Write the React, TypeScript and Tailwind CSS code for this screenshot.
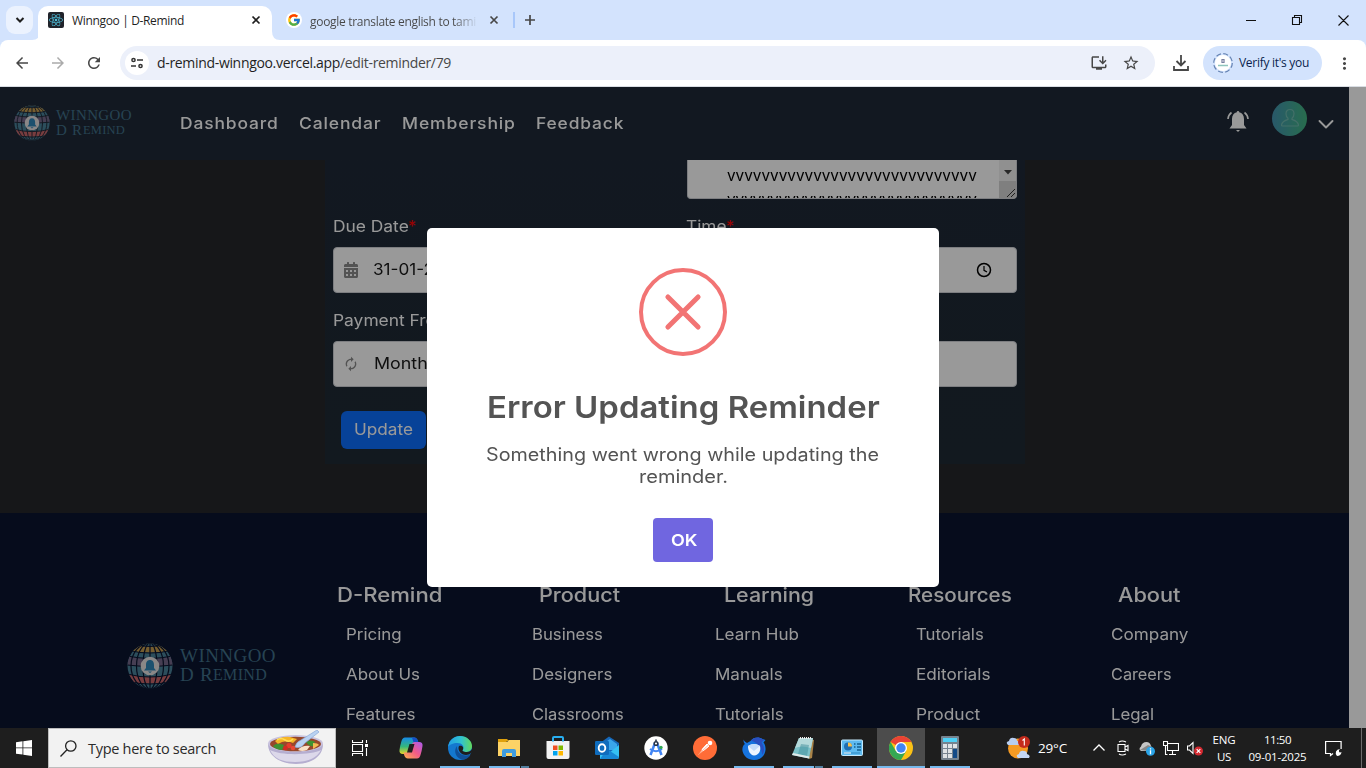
import React, { useLayoutEffect, useRef, useState } from "react";
import { FcGoogle } from "react-icons/fc";
import {
  MdArrowBack,
  MdArrowForward,
  MdRefresh,
  MdStarBorder,
  MdMoreVert,
  MdAutorenew,
  MdOutlineInstallDesktop,
} from "react-icons/md";
import { FaCalendarAlt, FaReact } from "react-icons/fa";

/* Single line of text tracked so that it fills a given width. */
function Fit({ w, className = "", children }: { w: number; className?: string; children: string }) {
  const ref = useRef<HTMLSpanElement>(null);
  const [ls, setLs] = useState(0);
  useLayoutEffect(() => {
    const el = ref.current;
    if (!el) return;
    const natural = el.getBoundingClientRect().width;
    setLs((w - natural) / children.length);
  }, []);
  return (
    <span ref={ref} className={"inline-block whitespace-nowrap " + className} style={{ letterSpacing: ls }}>
      {children}
    </span>
  );
}

/* Single line of text whose letters are widened to fill a given width. */
function Wide({ w, className = "", children }: { w: number; className?: string; children: string }) {
  const ref = useRef<HTMLSpanElement>(null);
  const [k, setK] = useState(1);
  useLayoutEffect(() => {
    const el = ref.current;
    if (el) setK(w / el.offsetWidth);
  }, []);
  return (
    <span className={"block shrink-0 whitespace-nowrap " + className} style={{ width: w }}>
      <span ref={ref} className="inline-block origin-left" style={{ transform: `scaleX(${k})` }}>
        {children}
      </span>
    </span>
  );
}

function Globe({ className, line }: { className: string; line: string }) {
  return (
    <svg viewBox="0 0 46 46" className={className}>
      <defs>
        <clipPath id="globe-clip">
          <circle cx="23" cy="23" r="22.5" />
        </clipPath>
      </defs>
      <g clipPath="url(#globe-clip)">
        <rect width="46" height="46" fill="#4a8299" />
        <path d="M0 0h46v7Q23 12 0 7z" fill="#c39b4f" />
        <path d="M10 0h26v2Q23 5 10 2z" fill="#4a8299" />
        <path d="M0 13Q23 18 46 13v9Q23 25 0 22z" fill="#75688a" />
        <path d="M0 31Q23 37 46 31v7Q23 43 0 38z" fill="#c9666a" />
        <g fill="none" stroke={line} strokeWidth="1.2">
          <path d="M23 0v46" />
          <ellipse cx="23" cy="23" rx="7" ry="23" />
          <ellipse cx="23" cy="23" rx="13.5" ry="23" />
          <ellipse cx="23" cy="23" rx="19" ry="23" />
          <path d="M8 1Q23 6 38 1M0 7Q23 13 46 7M0 13Q23 18 46 13M0 22Q23 25 46 22M0 31Q23 37 46 31M0 38Q23 44 46 38" />
        </g>
      </g>
      <circle cx="23" cy="23" r="9.3" fill="#e6e2e2" />
      <path d="M23 17c-3 0-4 2.300-4 5v3l-2 2.500h12l-2-2.500v-3c0-2.700-1-5-4-5zM21 28.500h4l-2 1.500z" fill="#2f86b8" />
    </svg>
  );
}

const NAV: [string, number, string][] = [
  ["Dashboard", 99, "mr-[20px]"],
  ["Calendar", 82, "mr-[21px]"],
  ["Membership", 114, "mr-[20px]"],
  ["Feedback", 88, ""],
];

const COLUMNS: { title: string; tw: number; shift: string; width: string; links: [string, number][] }[] = [
  { title: "D-Remind", tw: 105, shift: "-ml-[9px]", width: "w-[186px]", links: [["Pricing", 56], ["About Us", 74], ["Features", 70]] },
  { title: "Product", tw: 81, shift: "ml-[7px]", width: "w-[183px]", links: [["Business", 71], ["Designers", 80], ["Classrooms", 92]] },
  { title: "Learning", tw: 90, shift: "ml-[9px]", width: "w-[201px]", links: [["Learn Hub", 84], ["Manuals", 68], ["Tutorials", 69]] },
  { title: "Resources", tw: 104, shift: "-ml-[8px]", width: "w-[195px]", links: [["Tutorials", 68], ["Editorials", 74], ["Product", 64]] },
  { title: "About", tw: 62, shift: "ml-[7px]", width: "w-[120px]", links: [["Company", 77], ["Careers", 61], ["Legal", 43]] },
];

const UI = "font-['Open_Sans','Noto_Sans',sans-serif]";

function BrowserChrome() {
  return (
    <div className={"shrink-0 " + UI}>
      <div className="flex h-10 items-start bg-[#d3e3fd]">
        <div className="ml-[6px] mt-[6px] flex h-7 w-[27px] shrink-0 items-center justify-center rounded-[9px] bg-[#ebf2fe]">
          <svg className="h-3 w-3" viewBox="0 0 12 12" fill="none" stroke="#1f1f1f" strokeWidth="2"><path d="M2.500 4L6 7.500 9.500 4" /></svg>
        </div>
        <svg className="-ml-px h-10 w-2 shrink-0" viewBox="0 0 8 40"><path d="M0 40Q8 40 8 31V40z" fill="#fff" /></svg>
        <div className="-ml-[2px] mt-[6px] flex h-[34px] w-[234px] shrink-0 items-center rounded-t-[10px] bg-white pb-[6px] pl-[10px]">
          <div className="flex h-4 w-4 items-center justify-center rounded-[2px] bg-[#20232a]">
            <FaReact className="h-[14px] w-[14px] text-[#4fc0dc]" />
          </div>
          <Fit w={112} className="ml-[8px] mt-px text-[12px] text-[#1f1f1f]">Winngoo | D-Remind</Fit>
          <svg className="ml-[67px] h-[10px] w-[10px]" viewBox="0 0 10 10" stroke="#1f1f1f" strokeWidth="1.700"><path d="M1.500 1.500l7 7M8.500 1.500l-7 7" /></svg>
        </div>
        <svg className="h-10 w-2 shrink-0" viewBox="0 0 8 40"><path d="M8 40Q0 40 0 31V40z" fill="#fff" /></svg>
        <div className="flex h-10 items-center pl-[6px]">
          <div className="flex h-4 w-4 items-center justify-center rounded-full bg-white"><FcGoogle className="h-[14px] w-[14px]" /></div>
          <div className="ml-2 w-[168px] overflow-hidden bg-linear-to-r from-[#474747] from-85% to-[#d3e3fd] to-100% bg-clip-text text-transparent">
            <Fit w={166} className="text-[12px]">google translate english to tami</Fit>
          </div>
          <svg className="ml-[11px] h-[10px] w-[10px]" viewBox="0 0 10 10" stroke="#474747" strokeWidth="1.700"><path d="M1.500 1.500l7 7M8.500 1.500l-7 7" /></svg>
          <div className="ml-[14px] h-4 w-[1.500px] bg-[#a8c7fa]" />
          <svg className="ml-[9px] h-[12px] w-[12px]" viewBox="0 0 12 12" stroke="#474747" strokeWidth="1.700"><path d="M6 1v10M1 6h10" /></svg>
        </div>
        <svg className="ml-auto mr-[17px] h-10 w-[104px]" viewBox="0 0 104 40" fill="none" stroke="#111" strokeWidth="1.100">
          <path d="M1 20.500h10M47.500 17.500h7v7h-7zM49.500 17v-1.500h7v7H55M93.500 15.500l10 10M103.500 15.500l-10 10" />
        </svg>
      </div>
      <div className="bg-[#d3e3fd]">
        <div className="flex h-[47px] items-center rounded-t-lg border-b border-[#d9dde3] bg-white text-[#474747]">
          <MdArrowBack className="ml-[13px] h-[18px] w-[18px]" />
          <MdArrowForward className="ml-[18px] h-[18px] w-[18px] text-[#ababab]" />
          <MdRefresh className="ml-[18px] h-[18px] w-[18px]" />
          <div className="ml-[17px] flex h-[34px] w-[1035px] items-center rounded-full bg-[#ecf0fa] pl-[5px]">
            <div className="flex h-6 w-6 items-center justify-center rounded-full bg-white">
              <svg className="h-[14px] w-[14px]" viewBox="0 0 14 14" fill="none" stroke="#333" strokeWidth="1.500">
                <circle cx="3.500" cy="4" r="1.600" /><path d="M7 4h6M1 10h5" /><circle cx="10.500" cy="10" r="1.600" />
              </svg>
            </div>
            <div className="mb-px ml-[8px] flex text-[14px]">
              <Fit w={183} className="text-[#1f1f1f]">d-remind-winngoo.vercel.app</Fit>
              <Fit w={111} className="text-[#474747]">/edit-reminder/79</Fit>
            </div>
            <MdOutlineInstallDesktop className="ml-auto h-[18px] w-[18px]" />
            <MdStarBorder className="ml-[14px] mr-[15px] h-[18px] w-[18px]" />
          </div>
          <svg className="ml-[18px] h-4 w-4" viewBox="0 0 16 16" fill="none" stroke="#474747" strokeWidth="1.800"><path d="M8 0v10.500M3.500 6L8 10.500 12.500 6M1 11v4h14v-4" /></svg>
          <div className="ml-[14px] flex h-[34px] w-[119px] items-center rounded-full bg-[#d3e3fd] pl-[10px]">
            <svg className="h-5 w-5" viewBox="0 0 20 20">
              <circle cx="10" cy="10" r="8" fill="#fff" />
              <circle cx="10" cy="10" r="9.300" fill="none" stroke="#6684b4" strokeWidth="1.200" strokeDasharray="5 2.300" />
              <path d="M5 12.500h10" stroke="#8fc5bd" strokeWidth="1.500" />
              <path d="M9 6.500h2v3H9z" fill="none" stroke="#777e9f" strokeWidth="1.200" />
            </svg>
            <Fit w={70} className="ml-[6px] text-[12px] text-[#0a1f4d]">Verify it's you</Fit>
          </div>
          <MdMoreVert className="ml-[13px] h-[19px] w-[19px]" />
        </div>
      </div>
    </div>
  );
}

function NavBar() {
  return (
    <div className="flex h-[73px] shrink-0 items-center bg-[#1f2937] text-white">
      <Globe className="mb-px ml-[14px] h-9 w-9" line="#1f2937" />
      <div className="mb-[2px] ml-[6px] flex flex-col font-['Liberation_Serif',serif] leading-[15px] text-[#41718a]">
        <Fit w={76} className="text-[15px]">WINNGOO</Fit>
        <div className="flex text-[15px]">
          <Fit w={13}>D</Fit><span className="w-[3px]" /><Fit w={11}>R</Fit><Fit w={42} className="text-[12.500px]">EMIND</Fit>
        </div>
      </div>
      <div className="mb-[2px] ml-[48px] flex text-[16px] font-medium tracking-[0.8px]">
        {NAV.map(([t, w, m]) => (
          <Wide key={t} w={w} className={m}>{t}</Wide>
        ))}
      </div>
      <svg className="ml-auto mb-[4px] h-[21px] w-[22px]" viewBox="0 0 22 21" fill="#fff">
        <path d="M11 0a1.200 1.200 0 0 0-1.200 1.300C6.800 2 5 4.500 5 8v6l-2.500 3.500h17L17 14V8c0-3.500-1.800-6-4.800-6.700A1.200 1.200 0 0 0 11 0zM9 19h4l-2 2z" />
        <path d="M1 8q.2-4 3.500-6.500M21 8q-.2-4-3.500-6.500" fill="none" stroke="#fff" strokeWidth="1.600" />
      </svg>
      <div className="mb-[11px] ml-[23px] flex h-[35px] w-[35px] items-center justify-center rounded-full bg-linear-to-r from-[#4593b0] to-[#43b581]">
        <svg className="h-5 w-5" viewBox="0 0 20 20" fill="none" stroke="#70b9ae" strokeWidth="1.200">
          <path d="M10 1.500c-2.500 0-4 1.800-4 4.300 0 2 .8 3.700 2 4.500v1.200c-3 1-6 1.800-6.500 5.500q0 1 1 1h15q1 0 1-1c-.500-3.700-3.500-4.500-6.500-5.500v-1.200c1.200-.8 2-2.500 2-4.500 0-2.500-1.500-4.300-4-4.300z" />
        </svg>
      </div>
      <svg className="ml-[11px] mr-[15px] mt-[1px] h-4 w-4" viewBox="0 0 16 16" fill="none" stroke="#fff" strokeWidth="1.900" strokeLinecap="round" strokeLinejoin="round"><path d="M1.500 5L8 11.500 14.500 5" /></svg>
    </div>
  );
}

function FieldLabel({ w, children }: { w: number; children: string }) {
  return (
    <div className="flex h-5 items-center pb-[2px] text-[16px] text-white">
      <Wide w={w}>{children}</Wide>
      <span className="-ml-px text-[#f00]">*</span>
    </div>
  );
}

const box = "flex h-[46px] w-full items-center rounded-[4px] border border-[#d0d3d8] bg-white text-[#1a1a1a]";

function FormCard() {
  return (
    <div className="ml-[325px] flex h-[304px] w-[700px] shrink-0 gap-6 bg-linear-to-b from-[#1f2937] to-[#1e2a34] pl-2">
      <div className="w-[330px]">
        <div className="h-[57px]" />
        <FieldLabel w={76}>Due Date</FieldLabel>
        <div className={box + " mt-[10px]"}>
          <FaCalendarAlt className="ml-[10px] h-4 w-[14px] text-[#8b8b8b]" />
          <Wide w={93} className="mb-[2px] ml-[15px] text-[16px]">31-01-2025</Wide>
        </div>
        <div className="mt-[18px]"><FieldLabel w={163}>Payment Frequency</FieldLabel></div>
        <div className={box + " mt-[10px]"}>
          <MdAutorenew className="ml-[9px] h-4 w-4 text-[#8b8b8b]" />
          <Wide w={68} className="mb-[2px] ml-[15px] text-[16px]">Monthly</Wide>
        </div>
        <div className="ml-2 mt-6 flex h-[38px] w-[85px] items-center justify-center rounded-[6px] bg-[#0d6efd] pb-[2px] text-white">
          <Wide w={59} className="text-[16px]">Update</Wide>
        </div>
      </div>
      <div className="w-[330px]">
        <div className="flex h-[39px] overflow-hidden rounded-b-[4px] border border-t-0 border-[#d0d3d8] bg-white text-black">
          <div className="h-[38px] w-[311px] overflow-hidden pl-[39px] pt-[3px] text-[16px] leading-6">
            <Wide w={250}>vvvvvvvvvvvvvvvvvvvvvvvvvvvvv</Wide>
            <Wide w={250}>vvvvvvvvvvvvvvvvvvvvvvvvvvvvv</Wide>
          </div>
          <div className="flex w-[17px] flex-col bg-[#f1f1f1]">
            <div className="flex h-[21px] items-center justify-center">
              <svg className="mt-[3px] h-[5px] w-2" viewBox="0 0 8 5"><path d="M0 0h8L4 4.500z" fill="#444" /></svg>
            </div>
            <div className="flex grow items-end justify-end bg-[#d4d4d4]">
              <svg className="h-[10px] w-[10px]" viewBox="0 0 10 10" stroke="#333" strokeWidth="1"><path d="M1 9l8-8M5 9l4-4" /></svg>
            </div>
          </div>
        </div>
        <div className="-ml-px mt-[18px]"><FieldLabel w={41}>Time</FieldLabel></div>
        <div className={box + " mt-[10px] justify-end"}>
          <svg className="mb-px mr-[24px] h-4 w-4" viewBox="0 0 16 16" fill="none" stroke="#000" strokeWidth="1.500"><circle cx="8" cy="8" r="6.500" /><path d="M8 4v4.300l3 1.800" strokeWidth="1.200" /></svg>
        </div>
        <div className={box + " mt-[48px]"} />
      </div>
    </div>
  );
}

function Footer() {
  return (
    <div className="flex min-h-0 grow overflow-hidden bg-[#0a142f] text-white">
      <div className="flex w-[346px] shrink-0 items-start pl-[127px] pt-[130px]">
        <Globe className="h-[46px] w-[46px]" line="#0a142f" />
        <div className="ml-[7px] mt-[3px] flex flex-col font-['Liberation_Serif',serif] leading-[19px] text-[#41718a]">
          <Fit w={96} className="text-[19px]">WINNGOO</Fit>
          <div className="flex text-[19px]">
            <Fit w={16}>D</Fit><span className="w-[4px]" /><Fit w={13}>R</Fit><Fit w={54} className="text-[16px]">EMIND</Fit>
          </div>
        </div>
      </div>
      {COLUMNS.map((c) => (
        <div key={c.title} className={"shrink-0 pt-[67px] " + c.width}>
          <div className={"flex h-[30px] items-center text-[20px] font-medium " + c.shift}><Wide w={c.tw}>{c.title}</Wide></div>
          <div className="mt-[4px]">
            {c.links.map(([t, w]) => (
              <div key={t} className="flex h-10 items-center text-[16px]"><Wide w={w}>{t}</Wide></div>
            ))}
          </div>
        </div>
      ))}
    </div>
  );
}

function ErrorDialog() {
  return (
    <div className="absolute inset-0 flex items-center justify-center bg-black/40">
      <div className="flex h-[359px] w-[512px] flex-col items-center rounded-[5px] bg-white pt-10 text-[#545454]">
        <div className="flex h-[88px] w-[88px] shrink-0 items-center justify-center rounded-full border-4 border-[#f27474]">
          <svg className="h-10 w-10" viewBox="0 0 40 40" stroke="#f27474" strokeWidth="5" strokeLinecap="round"><path d="M4.900 4.900l30.200 30.200M35.100 4.900L4.900 35.100" /></svg>
        </div>
        <h2 className="mt-[33px] h-9 text-[30px] font-semibold leading-9"><Wide w={393}>Error Updating Reminder</Wide></h2>
        <div className="mt-[19px] flex flex-col items-center text-[18px] leading-[22px]">
          <Wide w={393} className="-ml-px">Something went wrong while updating the</Wide>
          <Wide w={89}>reminder.</Wide>
        </div>
        <button className="mt-[30px] flex h-11 w-[60px] items-center justify-center rounded-[4px] bg-[#7066e0] pb-px text-[16px] font-semibold text-white"><Wide w={27}>OK</Wide></button>
      </div>
    </div>
  );
}

function Svg({ children, size = "h-6 w-6" }: { children: React.ReactNode; size?: string }) {
  return <svg viewBox="0 0 24 24" className={size}>{children}</svg>;
}

const APPS: { id: string; bar: number; icon: React.ReactNode }[] = [
  { id: "copilot", bar: 0, icon: (
    <Svg>
      <defs>
        <linearGradient id="cpa" x1="0" y1="0" x2="0" y2="1"><stop offset="0" stopColor="#168be8" /><stop offset=".55" stopColor="#35b77c" /><stop offset="1" stopColor="#e9d729" /></linearGradient>
        <linearGradient id="cpb" x1="1" y1="0" x2="0" y2="1"><stop offset="0" stopColor="#a85af0" /><stop offset=".5" stopColor="#f35b87" /><stop offset="1" stopColor="#ffb34b" /></linearGradient>
      </defs>
      <path d="M6 1.500h9q3 0 4 4l.5 2h-4q-2 0-2.600 2l-2 7q-.5 1.500-2 1.500H4q-4 0-3.500-4 .6-4.500 2-9Q3.500 1.500 6 1.500z" fill="url(#cpa)" />
      <path d="M13 1.500h2.500q2.500 0 3.500 3.500l1 3h-5z" fill="#164fc4" />
      <path d="M18 22.500H9q-3 0-4-4l-.3-2h4q2 0 2.600-2l2-7Q14 6 15.500 6h4.500q4 0 3.500 4-.6 4.500-2 9-1 3.500-3.500 3.500z" fill="url(#cpb)" />
      <path d="M10.500 8h5l-2.500 8.500H8z" fill="#1e1e1e" />
    </Svg>) },
  { id: "edge", bar: 1, icon: (
    <Svg>
      <defs>
        <linearGradient id="eda" x1="0" y1="0" x2="1" y2="0"><stop offset="0" stopColor="#229ee6" /><stop offset=".55" stopColor="#31c3cf" /><stop offset="1" stopColor="#63d95b" /></linearGradient>
      </defs>
      <circle cx="12" cy="12" r="12" fill="#1478cf" />
      <path d="M0 11C1 4 6 0 12 0c7 0 12 5 12 10 0 4-3 6-6 6-3.500 0-4.500-1.300-3.500-2.500C17 10.500 14 7 9.500 7 5 7 1 9 0 11z" fill="url(#eda)" />
      <path d="M9 10c-4 5-1 12 5 13.500 4 .3 7.500-2 8.500-5C15 21.500 8.500 17 9 10z" fill="#105099" />
      <path d="M11 10c-2 4 2 9 7 9 2 0 4-1 5-2l1-1v-3c-1 2-3.500 3.500-6.500 3-3-.3-3.500-1.500-2.500-2.500 1-1.800-.7-4.500-4-3.500z" fill="#1e1e1e" />
    </Svg>) },
  { id: "explorer", bar: 2, icon: (
    <Svg>
      <path d="M1 3h9l2 2h-2L9 7H1z" fill="#e0a10c" /><path d="M1 6h9l2-2h11v16H1z" fill="#fdd366" />
      <path d="M5 21v-6q0-2 2-2h10q2 0 2 2v6h-4v-4H9v4z" fill="#3f9cdf" />
    </Svg>) },
  { id: "store", bar: 0, icon: (
    <Svg>
      <path d="M7 7V2q0-1 1-1h8q1 0 1 1v5" fill="none" stroke="#28aef0" strokeWidth="2" />
      <path d="M.5 5h23v16q0 2-2 2h-19q-2 0-2-2z" fill="#f2f2f2" />
      <path d="M7 9.500h4.500V14H7z" fill="#f05022" /><path d="M12.500 9.500H17V14h-4.500z" fill="#7eb900" /><path d="M7 15h4.500v4.500H7z" fill="#00a3ee" /><path d="M12.500 15H17v4.500h-4.500z" fill="#ffb800" />
      <path d="M7 5.500V3M17 5.500V3" stroke="#28aef0" strokeWidth="2" />
    </Svg>) },
  { id: "outlook", bar: 0, icon: (
    <Svg>
      <path d="M5 7l9-6.500L24 7v9H5z" fill="#1667b8" /><path d="M8 8l7-5 7 5v6H8z" fill="#3aa5ea" />
      <path d="M5 23V13l9 4 10-8v12q0 2-2 2z" fill="#35c0f2" /><path d="M5 23l17 0q2 0 2-2L12 13z" fill="#1888d6" />
      <rect x="0" y="5" width="14" height="14" rx="1.200" fill="#0f6cbd" /><ellipse cx="7" cy="12" rx="3.300" ry="3.800" fill="none" stroke="#fff" strokeWidth="1.900" />
    </Svg>) },
  { id: "studio", bar: 0, icon: (
    <Svg>
      <circle cx="12" cy="12" r="11.700" fill="#fff" />
      <path d="M11 7L6.500 19M13 7l4.500 12" stroke="#4285f4" strokeWidth="2.500" /><path d="M6 13q6 4.500 12 0" fill="none" stroke="#4285f4" strokeWidth="2" />
      <circle cx="12" cy="7.500" r="1.800" fill="#fff" stroke="#26344a" strokeWidth="1.500" /><path d="M12 3.500v2" stroke="#26344a" strokeWidth="1.600" /><circle cx="17" cy="11.500" r="1.700" fill="#34a853" />
    </Svg>) },
  { id: "postman", bar: 0, icon: (
    <Svg>
      <circle cx="12" cy="12" r="12" fill="#ff6c37" />
      <path d="M5 19l8-10 2 2z" fill="#fff" /><path d="M9 13.500l5-5.500 2 2-5.500 4.500z" fill="#fff" stroke="#fff" />
      <circle cx="17" cy="7" r="2.300" fill="#fff" /><path d="M6 18l10-9.500" stroke="#ff6c37" strokeWidth=".5" />
    </Svg>) },
  { id: "thunderbird", bar: 1, icon: (
    <Svg>
      <path d="M1.500 3.500c0 2 .3 3.500 1.500 4.500C1 9 0 12 .5 15c1 5 5.500 9 11.500 9s11-4 11.500-10c.3-3-.5-5.500-2-7.500l2-2.500-3-1C17 .5 11 1 8.500 5L5 7C3.500 6 2 5 1.500 3.500z" fill="#1673de" />
      <path d="M9 4.500c3-3.500 8-4 11-1.500l2 1-2.500 2.500c3 4 3.500 9 .5 12.500.5-6-4-12-11-14.500z" fill="#294fc0" />
      <path d="M6 10q6-4 12 0c1 5-1 9-6 9.500C8 19 6 15 6 10z" fill="#eef5ff" /><path d="M6 10l6 5 6-5q-6-4-12 0z" fill="#c4dcfa" />
    </Svg>) },
  { id: "notepad", bar: 2, icon: (
    <Svg>
      <path d="M8 2l15 2-2 18-3 1z" fill="#a98348" /><path d="M8 2h14l-4 20.500L1 19z" fill="#7bc1c8" />
      <path d="M8 2h14l-2 10Q10 9 4 12z" fill="#b4d9da" /><path d="M10 8l8 1-2 11-9-2z" fill="#3f8e9a" opacity=".5" /><path d="M1 19l17 3.500.4-2L2 17z" fill="#dfe9e9" /><path d="M9 2h12" stroke="#eee" strokeWidth="2" strokeDasharray="1 1" />
    </Svg>) },
  { id: "control", bar: 1, icon: (
    <Svg>
      <rect x="1.500" y="4" width="21" height="15.500" rx="1" fill="#5dbaf0" stroke="#c4e8fb" />
      <circle cx="8" cy="10.500" r="4" fill="#1f6fb2" /><path d="M8 10.500V6.500a4 4 0 0 1 4 4z" fill="#f8c04a" />
      <path d="M14 8h1.500M17 8h4M14 11h1.500M17 11h4M17 14h4" stroke="#15608f" strokeWidth="1.400" /><path d="M4 17h16" stroke="#2c86bf" /><path d="M4 17h7" stroke="#fff" />
    </Svg>) },
  { id: "chrome", bar: 1, icon: (
    <Svg>
      <circle cx="12" cy="12" r="12" fill="#fbc116" />
      <path d="M12 12L1.600 6A12 12 0 0 1 22.400 6H12z" fill="#ea4335" />
      <path d="M1.600 6A12 12 0 0 0 12 24l5.200-9L12 12 6.800 15z" fill="#34a853" />
      <circle cx="12" cy="12" r="6" fill="#fff" /><circle cx="12" cy="12" r="4.700" fill="#4285f4" />
    </Svg>) },
  { id: "calc", bar: 1, icon: (
    <Svg>
      <rect x="3" y="0" width="18" height="24" rx="1" fill="#76838f" /><rect x="5" y="2" width="14" height="4" fill="#4fd0f5" />
      <path d="M5 8h4v4H5zM10 8h4v4h-4zM15 8h4v4h-4zM5 13h4v4H5zM10 13h4v4h-4zM5 18h4v4H5zM10 18h4v4h-4z" fill="#dfe3e6" /><path d="M15 13h4v9h-4z" fill="#134a87" />
    </Svg>) },
];

function FoodBowl() {
  return (
    <svg className="h-9 w-[56px]" viewBox="0 0 56 36">
      <path d="M1 14c0 12 12 20 28 20s27-8 27-20z" fill="#b5aed0" />
      <path d="M3 20c4 9 13 12 25 12 13 0 22-4 26-12-9 5-40 6-51 0z" fill="#dcd8ea" />
      <ellipse cx="28.500" cy="13.500" rx="27.500" ry="8.500" fill="#c9c3de" /><ellipse cx="28.500" cy="14" rx="25.500" ry="7.200" fill="#97482c" />
      <path d="M8 11q7-5 15-4l7 2-4 4q-8-4-15 1z" fill="#f6b526" /><path d="M10 10q4-3 8 0t8-1" fill="none" stroke="#ffdc52" strokeWidth="1.600" />
      <path d="M6 16q4-4 11-1l-2 5q-6 0-9-4zM39 12q5-3 9 0l-1 4q-5 1-8-4z" fill="#3f9232" />
      <circle cx="22" cy="15.500" r="2.600" fill="#e63c2c" /><circle cx="18.500" cy="18" r="2.300" fill="#d52a24" /><circle cx="26" cy="18" r="2.300" fill="#e94934" />
      <path d="M31 20q4-5 12-4l-3 4q-5 2-9 0z" fill="#fae1c6" /><path d="M46 13q5 0 6 2l-6 4z" fill="#f3bc54" />
      <path d="M34 10L50 0l2 2-14 11q-4 6-10 4 1-5 6-7z" fill="#b9d2f2" stroke="#8ba9d8" strokeWidth=".7" />
    </svg>
  );
}

function Taskbar() {
  return (
    <div className={"flex h-10 shrink-0 items-stretch bg-[#1e1e1e] text-white " + UI}>
      <div className="flex w-12 items-center justify-center">
        <svg className="h-4 w-4" viewBox="0 0 16 16" fill="#fff"><path d="M0 2.200l6.500-.9v6.200H0zM7.300 1.200L16 0v7.500H7.300zM0 8.300h6.500v6.300L0 13.700zM7.300 8.300H16V16l-8.700-1.200z" /></svg>
      </div>
      <div className="flex w-[288px] items-center border border-[#bdbdbd] bg-[#f2f2f2]">
        <svg className="ml-[11px] h-[17px] w-[17px]" viewBox="0 0 17 17" fill="none" stroke="#222" strokeWidth="1.300"><circle cx="10.800" cy="6" r="5.200" /><path d="M7 9.800L.5 16.500" /></svg>
        <Fit w={128} className="ml-[11px] mt-px text-[14.500px] text-[#2b2b2b]">Type here to search</Fit>
        <div className="ml-[51px]"><FoodBowl /></div>
      </div>
      <div className="flex w-[51px] items-center pl-[16px]">
        <svg className="h-4 w-4" viewBox="0 0 16 16" fill="none" stroke="#fff" strokeWidth="1.100"><path d="M.5 0v2.500h10V0M.5 16v-2.500h10V16M.5 4.500h10v7H.5zM14.500 0v3M14.500 8v8" /><path d="M13 4h3v3h-3z" fill="#fff" stroke="none" /></svg>
      </div>
      <div className="flex gap-px">
        {APPS.map((a) => (
          <div key={a.id} className={"flex w-12 flex-col items-center " + (a.id === "chrome" ? "bg-[#4c4c4c]" : "")}>
            <div className="flex h-[38px] items-center pt-[2px]">{a.icon}</div>
            <div className={"flex h-[2px] " + (a.id === "chrome" ? "w-12" : "w-10")}>
              {a.bar > 0 && <div className="grow bg-[#76b9ed]" />}
              {a.bar === 2 && <div className="ml-px w-2 bg-[#527f9f]" />}
            </div>
          </div>
        ))}
      </div>
      <div className="ml-[32px] flex items-center">
        <Svg>
          <circle cx="12" cy="12.500" r="10" fill="#f59a23" />
          <path d="M2 9q-3-3 1-4 1-4 5-3 3 0 3 3 4 0 3 4z" fill="#b7cdf0" /><path d="M12 22q-3-3 1-4 1-4 5-3 3 0 3 3 4 1 2 4z" fill="#c4d7f5" />
          <circle cx="18" cy="6" r="6" fill="#c42b1c" /><path d="M16.500 4.500L18.300 3v6.500" fill="none" stroke="#fff" strokeWidth="1.100" />
        </Svg>
        <Fit w={29} className="ml-[8px] text-[13.500px]">29°C</Fit>
        <svg className="ml-[26px] h-3 w-3" viewBox="0 0 12 12" fill="none" stroke="#fff" strokeWidth="1.300"><path d="M.5 8.500L6 3l5.500 5.500" /></svg>
        <svg className="ml-[12px] h-4 w-3" viewBox="0 0 12 16" fill="none" stroke="#fff" strokeWidth="1.100"><path d="M2 2Q5 0 9 2M2 14q3 2 7 0M1 4.500h7v7H1zM8 7l3-1.500v5L8 9" /></svg>
        <svg className="ml-[10px] h-4 w-4" viewBox="0 0 16 16"><path d="M2 11Q-1 9 2 6.500 3 2 7.500 2q3.500 0 4.500 4l2 5z" fill="#c5c5c5" /><path d="M1 10l8-5 4 2-4 4z" fill="#878787" /><circle cx="11.500" cy="11.300" r="4.500" fill="#2aa4e8" /><path d="M11.500 8.200v1.200M11.500 10.300v4" stroke="#fff" strokeWidth="1.300" /></svg>
        <svg className="ml-[8px] h-4 w-4" viewBox="0 0 16 16" fill="none" stroke="#fff" strokeWidth="1.100"><path d="M5 3.500h10.500v7H4.500V6M9.500 11v3M6 14.500h7M.5 1.500h4v4h-4zM2.500 5.500v9h2" /></svg>
        <svg className="ml-[8px] h-4 w-4" viewBox="0 0 16 16"><path d="M.5 6h2L6 2.500v11L2.500 10h-2z" fill="none" stroke="#fff" strokeWidth="1.100" /><circle cx="11.500" cy="11" r="4.500" fill="#d42a31" /><path d="M9.700 9.200l3.600 3.600M13.300 9.200l-3.600 3.600" stroke="#fff" strokeWidth="1.200" /></svg>
        <div className="ml-[9px] flex w-6 flex-col items-center text-[11.500px] leading-[17px]">
          <Fit w={23}>ENG</Fit><Fit w={14}>US</Fit>
        </div>
        <div className="ml-[12px] flex w-[59px] flex-col items-center text-[11.500px] leading-[17px]">
          <Fit w={27}>11:50</Fit><Fit w={58}>09-01-2025</Fit>
        </div>
        <svg className="ml-[18px] h-[17px] w-[17px]" viewBox="0 0 17 17" fill="none" stroke="#fff" strokeWidth="1.200"><path d="M8 13.500l-2.500 2v-2H.6V1.500h15.500V9" /><path d="M15 9q-3 0-4 2.500T12 16q4 0 4.500-4-2 1-2.500-.5T15 9z" fill="#fff" stroke="none" /></svg>
        <div className="ml-[19px] h-10 w-px bg-[#6b6b6b]" />
      </div>
    </div>
  );
}

export default function App() {
  return (
    <div className="flex h-[768px] w-[1366px] flex-col overflow-hidden bg-white">
      <BrowserChrome />
      <div className="relative flex h-[641px] shrink-0 font-['Inter',sans-serif]">
        <div className="flex w-[1349px] flex-col bg-[#25272a]">
          <NavBar />
          <FormCard />
          <div className="h-[49px] shrink-0" />
          <Footer />
        </div>
        <div className="w-[17px] bg-white" />
        <ErrorDialog />
      </div>
      <Taskbar />
    </div>
  );
}
